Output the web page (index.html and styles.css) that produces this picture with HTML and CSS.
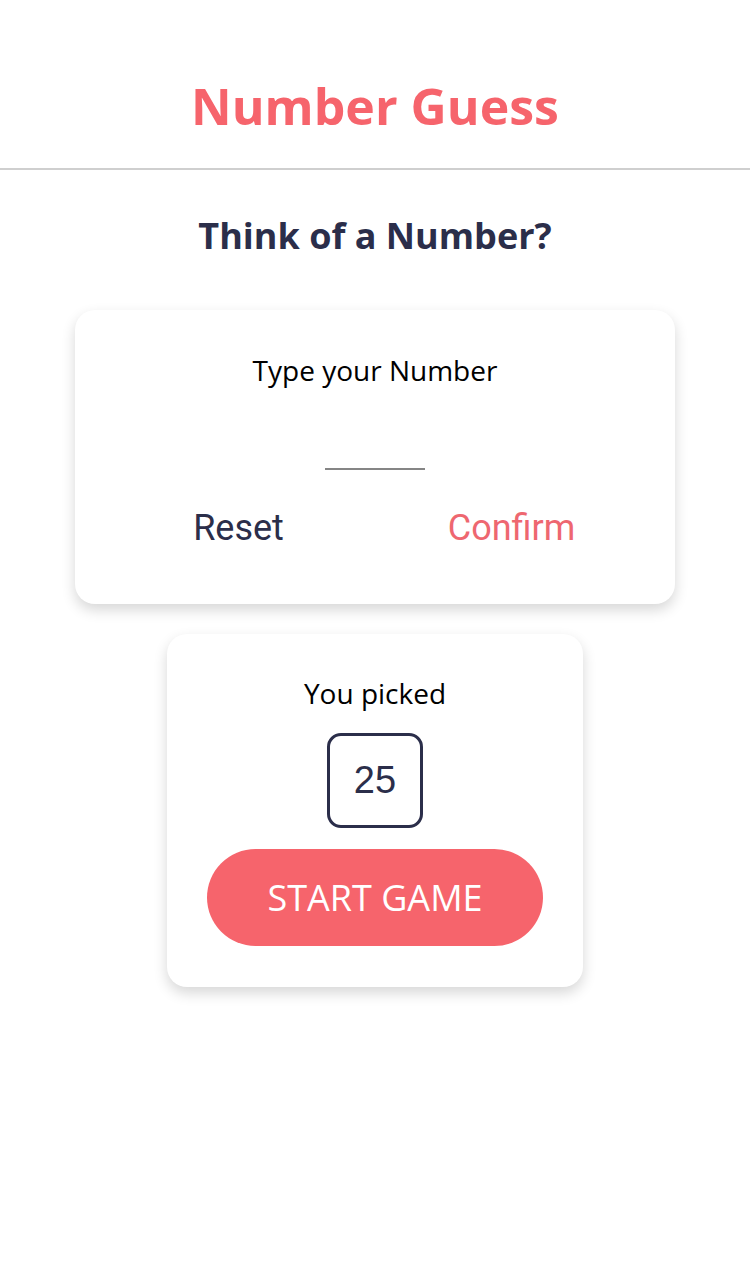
FILE: index.html
```html
<!DOCTYPE html>
<html>
<head>
<meta charset="utf-8">
<link rel="stylesheet" href="styles.css">
</head>
<body>
<div class="screen">
  <header class="header">
    <h1 class="title">Number Guess</h1>
  </header>
  <main class="content">
    <h2 class="subtitle">Think of a Number?</h2>
    <section class="card input-card">
      <p class="label">Type your Number</p>
      <div class="input-line"></div>
      <div class="actions">
        <button class="link-btn reset">Reset</button>
        <button class="link-btn confirm">Confirm</button>
      </div>
    </section>
    <section class="card summary-card">
      <p class="label">You picked</p>
      <div class="number-box">25</div>
      <button class="start-btn">START GAME</button>
    </section>
  </main>
</div>
</body>
</html>
```
FILE: styles.css
```css
* { box-sizing: border-box; }
html, body { margin: 0; padding: 0; background: #fff; }
.screen { width: 750px; height: 1284px; font-family: "Open Sans", sans-serif; }
.header {
  height: 170px;
  border-bottom: 2px solid #cfcfcf;
  display: flex;
  align-items: flex-end;
  justify-content: center;
  padding-bottom: 37px;
}
.title {
  margin: 0;
  font-size: 50px;
  font-weight: 700;
  color: #f6646c;
  line-height: 1;
}
.content { display: flex; flex-direction: column; align-items: center; }
.subtitle {
  margin: 48px 0 0;
  font-size: 36px;
  font-weight: 700;
  color: #2b2e4a;
  line-height: 1;
}
.card {
  background: #fff;
  border-radius: 20px;
  box-shadow: 0 6px 14px rgba(0,0,0,0.16);
  display: flex;
  flex-direction: column;
  align-items: center;
}
.input-card { width: 600px; height: 294px; margin-top: 56px; padding-top: 42px; }
.label { margin: 0; font-size: 28px; color: #000; line-height: 36px; }
.input-line { width: 100px; height: 2px; background: #858585; margin-top: 80px; }
.actions { display: flex; gap: 73px; margin-top: 36px; }
.link-btn {
  width: 200px;
  background: none;
  border: none;
  padding: 0;
  font-family: "Roboto", "Inter", sans-serif;
  font-size: 36px;
  line-height: 44px;
}
.reset { color: #2b2e4a; }
.confirm { color: #ee6770; }
.summary-card { width: 416px; height: 353px; margin-top: 30px; padding-top: 41px; }
.number-box {
  width: 96px; height: 95px;
  margin-top: 22px;
  border: 3px solid #2b2e4a;
  border-radius: 14px;
  display: flex; align-items: center; justify-content: center;
  font-family: "Liberation Sans", Arial, sans-serif;
  font-size: 38px;
  color: #2b2e4a;
}
.start-btn {
  margin-top: 21px;
  width: 336px; height: 97px;
  border: none;
  border-radius: 49px;
  background: #f6646c;
  color: #fff;
  font-family: "Open Sans", sans-serif;
  font-size: 36px;
}
```
